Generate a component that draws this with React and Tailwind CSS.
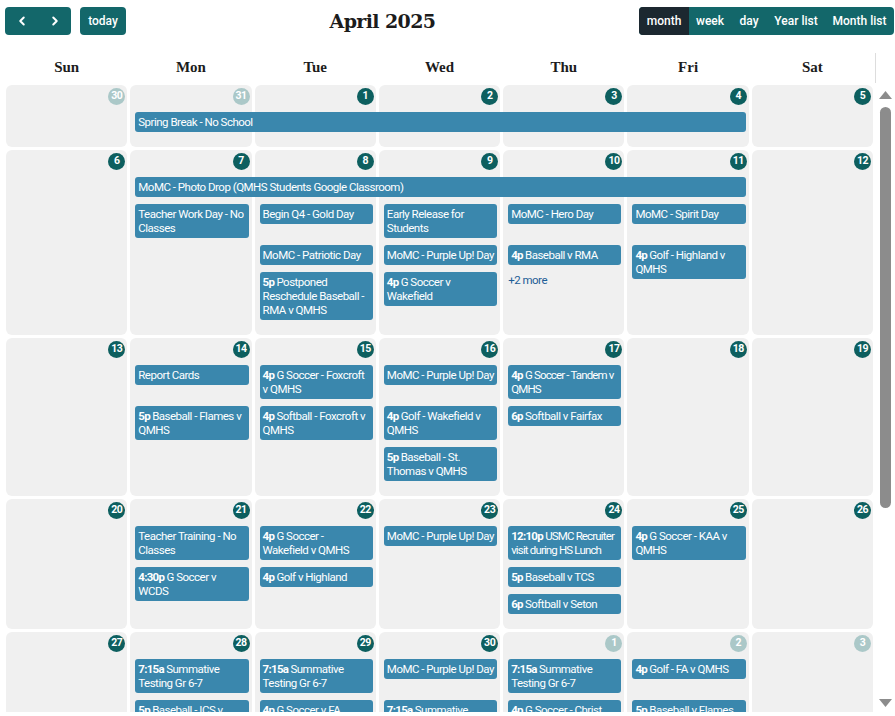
import { ChevronLeft, ChevronRight } from 'lucide-react';

// line breaks follow the wraps in the calendar
const weeks = [
  {
    days: [30, 31, 1, 2, 3, 4, 5],
    faded: [0, 1],
    rows: 1,
    events: [{ c: 2, s: 5, r: 2, title: 'Spring Break - No School' }],
  },
  {
    days: [6, 7, 8, 9, 10, 11, 12],
    faded: [],
    rows: 4,
    events: [
      { c: 2, s: 5, r: 2, title: 'MoMC - Photo Drop (QMHS Students Google Classroom)' },
      { c: 2, r: 3, title: 'Teacher Work Day - No\nClasses' },
      { c: 3, r: 3, title: 'Begin Q4 - Gold Day' },
      { c: 4, r: 3, title: 'Early Release for\nStudents' },
      { c: 5, r: 3, title: 'MoMC - Hero Day' },
      { c: 6, r: 3, title: 'MoMC - Spirit Day' },
      { c: 3, r: 4, title: 'MoMC - Patriotic Day' },
      { c: 4, r: 4, title: 'MoMC - Purple Up! Day' },
      { c: 5, r: 4, time: '4p', title: 'Baseball v RMA' },
      { c: 6, r: 4, rs: 2, time: '4p', title: 'Golf - Highland v\nQMHS' },
      { c: 3, r: 5, time: '5p', title: 'Postponed\nReschedule Baseball -\nRMA v QMHS' },
      { c: 4, r: 5, time: '4p', title: 'G Soccer v\nWakefield' },
      { c: 5, r: 5, more: '+2 more' },
    ],
  },
  {
    days: [13, 14, 15, 16, 17, 18, 19],
    faded: [],
    rows: 3,
    events: [
      { c: 2, r: 2, title: 'Report Cards' },
      { c: 3, r: 2, time: '4p', title: 'G Soccer - Foxcroft\nv QMHS' },
      { c: 4, r: 2, title: 'MoMC - Purple Up! Day' },
      { c: 5, r: 2, time: '4p', title: 'G Soccer - Tandem v\nQMHS', tight: true },
      { c: 2, r: 3, time: '5p', title: 'Baseball - Flames v\nQMHS' },
      { c: 3, r: 3, time: '4p', title: 'Softball - Foxcroft v\nQMHS' },
      { c: 4, r: 3, time: '4p', title: 'Golf - Wakefield v\nQMHS' },
      { c: 5, r: 3, time: '6p', title: 'Softball v Fairfax' },
      { c: 4, r: 4, time: '5p', title: 'Baseball - St.\nThomas v QMHS' },
    ],
  },
  {
    days: [20, 21, 22, 23, 24, 25, 26],
    faded: [],
    rows: 3,
    events: [
      { c: 2, r: 2, title: 'Teacher Training - No\nClasses' },
      { c: 3, r: 2, time: '4p', title: 'G Soccer -\nWakefield v QMHS' },
      { c: 4, r: 2, title: 'MoMC - Purple Up! Day' },
      { c: 5, r: 2, time: '12:10p', title: 'USMC Recruiter\nvisit during HS Lunch', tight: true },
      { c: 6, r: 2, time: '4p', title: 'G Soccer - KAA v\nQMHS' },
      { c: 2, r: 3, rs: 2, time: '4:30p', title: 'G Soccer v\nWCDS' },
      { c: 3, r: 3, time: '4p', title: 'Golf v Highland' },
      { c: 5, r: 3, time: '5p', title: 'Baseball v TCS' },
      { c: 5, r: 4, time: '6p', title: 'Softball v Seton' },
    ],
  },
  {
    days: [27, 28, 29, 30, 1, 2, 3],
    faded: [4, 5, 6],
    rows: 2,
    events: [
      { c: 2, r: 2, time: '7:15a', title: 'Summative\nTesting Gr 6-7' },
      { c: 3, r: 2, time: '7:15a', title: 'Summative\nTesting Gr 6-7' },
      { c: 4, r: 2, title: 'MoMC - Purple Up! Day' },
      { c: 5, r: 2, time: '7:15a', title: 'Summative\nTesting Gr 6-7' },
      { c: 6, r: 2, time: '4p', title: 'Golf - FA v QMHS' },
      { c: 2, r: 3, time: '5p', title: 'Baseball - ICS v\nQMHS' },
      { c: 3, r: 3, time: '4p', title: 'G Soccer v FA\nat Stadium' },
      { c: 4, r: 3, time: '7:15a', title: 'Summative\nTesting Gr 8' },
      { c: 5, r: 3, time: '4p', title: 'G Soccer - Christ\nChapel v QMHS' },
      { c: 6, r: 3, time: '5p', title: 'Baseball v Flames' },
    ],
  },
];

const dayNames = ['Sun', 'Mon', 'Tue', 'Wed', 'Thu', 'Fri', 'Sat'];
const views = [
  { label: 'month', w: 'w-[50px]', active: true },
  { label: 'week', w: 'w-[42px]' },
  { label: 'day', w: 'w-[36px]' },
  { label: 'Year list', w: 'w-[58px]' },
  { label: 'Month list', w: 'w-[69px]' },
];

// condensed look: Roboto squeezed a little
const evFont = "font-['Roboto',sans-serif] text-[11.5px]";

function Week({ week }) {
  return (
    <div
      className="grid grid-cols-7 gap-x-[3px] gap-y-[7px]"
      style={{ gridTemplateRows: `20px repeat(${week.rows}, auto) 8px` }}
    >
      {week.days.map((d, i) => (
        <div key={'bg' + i} className="bg-[#f0f0f0] rounded-[6px]" style={{ gridColumn: i + 1, gridRow: '1 / -1' }} />
      ))}
      {week.days.map((d, i) => (
        <div
          key={'n' + i}
          className={`self-start justify-self-end mt-[3px] mr-[2px] w-[17px] h-[17px] rounded-full flex items-center justify-center text-white text-[10.5px] font-bold tracking-[-0.5px] font-['Roboto',sans-serif] ${
            week.faded.includes(i) ? 'bg-[#abc8c8]' : 'bg-[#0d5f5f]'
          }`}
          style={{ gridColumn: i + 1, gridRow: 1 }}
        >
          {d}
        </div>
      ))}
      {week.events.map((e, i) =>
        e.more ? (
          <div
            key={i}
            className={`self-start ml-[5px] pt-[1px] leading-[14px] text-[#1d5d96] tracking-[-0.5px] ${evFont}`}
            style={{ gridColumn: e.c, gridRow: e.r }}
          >
            {e.more}
          </div>
        ) : (
          <div
            key={i}
            className={`self-start ml-[5px] mr-[3px] bg-[#3a87ad] text-white rounded-[3px] pl-[3px] pr-[2px] py-[3px] leading-[14px] whitespace-pre ${evFont} ${
              e.tight ? 'tracking-[-0.85px]' : 'tracking-[-0.5px]'
            }`}
            style={{ gridColumn: `${e.c} / span ${e.s || 1}`, gridRow: `${e.r} / span ${e.rs || 1}` }}
          >
            {e.time && <b className="font-bold tracking-[-0.7px]">{e.time} </b>}
            {e.title}
          </div>
        )
      )}
    </div>
  );
}

export default function App() {
  return (
    <div className="w-[895px] h-[716px] overflow-hidden bg-white">
      {/* toolbar */}
      <div className="flex items-center justify-between pl-[5px] pr-[1px] pt-[7px] font-['Roboto',sans-serif] text-[12px] font-medium text-white">
        <div className="flex items-center">
          <div className="flex h-[28px] rounded-[4px] bg-[#13676a]">
            <button className="w-[33px] flex items-center justify-center">
              <ChevronLeft size={14} strokeWidth={3.4} />
            </button>
            <button className="w-[33px] flex items-center justify-center">
              <ChevronRight size={14} strokeWidth={3.4} />
            </button>
          </div>
          <button className="ml-[9px] h-[28px] w-[46px] rounded-[4px] bg-[#13676a]">today</button>
        </div>
        <h2 className="font-['DejaVu_Serif',serif] font-bold text-[19px] text-[#1c1c1c] tracking-[-0.6px]">April 2025</h2>
        <div className="flex h-[28px] rounded-[4px] overflow-hidden bg-[#13676a]">
          {views.map((v) => (
            <button key={v.label} className={`${v.w} h-full ${v.active ? 'bg-[#1c2830]' : ''}`}>
              {v.label}
            </button>
          ))}
        </div>
      </div>

      {/* day names */}
      <div className="mt-[17px] flex h-[30px]">
        <div className="w-[876px] border-r border-[#dddddd] pl-[6px] pr-[2px] grid grid-cols-7 gap-x-[3px]">
          {dayNames.map((d) => (
            <div key={d} className="flex items-center justify-center font-['Liberation_Serif',serif] font-bold text-[15px] text-[#1c1c1c]">
              {d}
            </div>
          ))}
        </div>
      </div>

      {/* body */}
      <div className="flex h-[628px] mt-[1px]">
        <div className="w-[876px] overflow-hidden pl-[6px] pr-[3px] pt-[1px] flex flex-col gap-[3px]">
          {weeks.map((w, i) => (
            <Week key={i} week={w} />
          ))}
        </div>
        <div className="w-[19px] flex flex-col items-center bg-white">
          <svg width="13" height="8" viewBox="0 0 13 8" className="mt-[7px]">
            <path d="M6.5 0 L13 8 L0 8 Z" fill="#8c8c8c" />
          </svg>
          <div className="mt-[8px] w-[11px] h-[401px] rounded-full bg-[#8c8c8c]" />
          <div className="flex-1" />
          <svg width="13" height="8" viewBox="0 0 13 8" className="mb-[5px]">
            <path d="M0 0 L13 0 L6.5 8 Z" fill="#8c8c8c" />
          </svg>
        </div>
      </div>
    </div>
  );
}
